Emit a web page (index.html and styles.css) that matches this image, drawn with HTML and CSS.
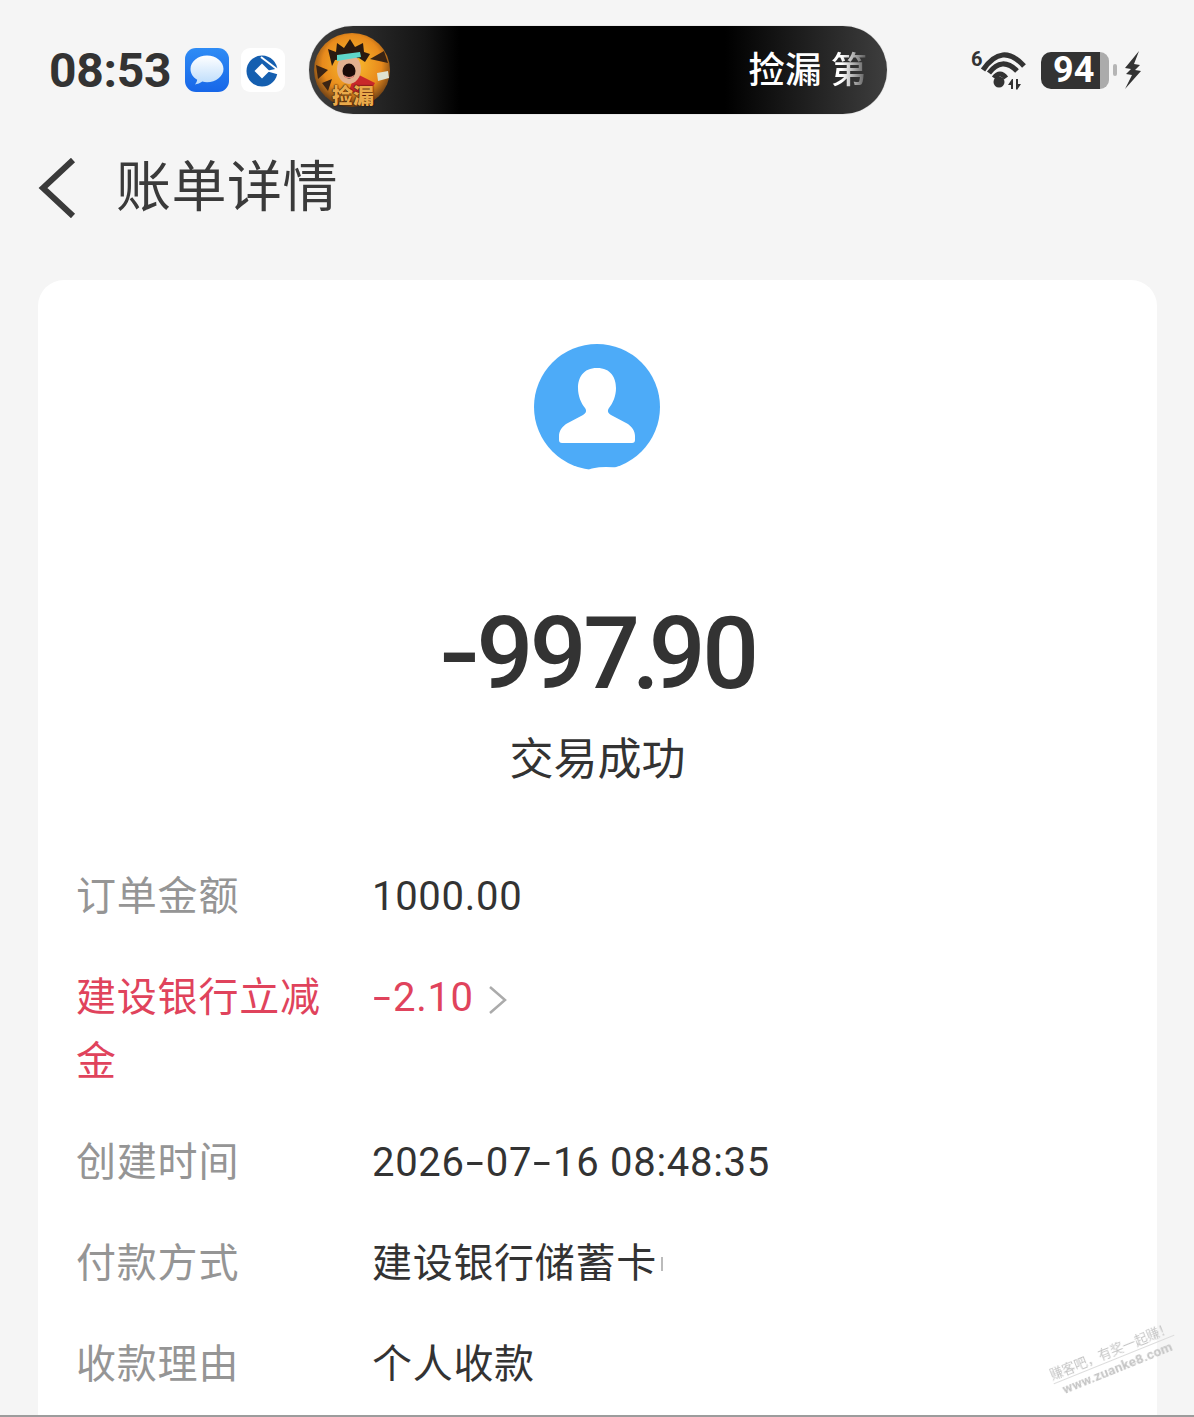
FILE: index.html
```html
<!DOCTYPE html>
<html lang="zh-CN">
<head>
  <meta charset="UTF-8" />
  <title>账单详情</title>
  <link rel="stylesheet" href="styles.css">
</head>
<body>
  <div class="page">
    <div class="statusbar">
      <div class="status-left">
        <span class="time">08:53</span>
        <svg class="app-icon" viewBox="0 0 44 44">
          <defs>
            <linearGradient id="msgBg" x1="0" y1="0" x2="0" y2="1"><stop offset="0" stop-color="#2f8cf5"/><stop offset="1" stop-color="#1766e8"/></linearGradient>
            <linearGradient id="msgFill" x1="0" y1="0" x2="0" y2="1"><stop offset="0" stop-color="#ffffff"/><stop offset="1" stop-color="#bcdcfb"/></linearGradient>
          </defs>
          <rect width="44" height="44" rx="11" fill="url(#msgBg)"/>
          <path d="M22 7.500C13 7.500 5.500 13.500 5.500 21c0 4.500 2.600 8.300 6.700 10.700-.2 1.800-1.100 3.500-2.400 4.800 2.900-.3 5.400-1.300 7.500-2.900 1.500.4 3.100.6 4.700.6 9 0 16.500-6 16.500-13.200S31 7.500 22 7.500z" fill="url(#msgFill)"/>
        </svg>
        <svg class="app-icon bank-icon" viewBox="0 0 44 44">
          <rect width="44" height="44" rx="9" fill="#fff"/>
          <circle cx="21" cy="23" r="15.500" fill="#155fb0"/>
          <path d="M21 15.500l7.500 7.500-7.500 7.500-7.500-7.500z" fill="#fff"/>
          <path d="M25 23l14-3v7z" fill="#fff"/>
          <path d="M20 9l17 13" fill="none" stroke="#fff" stroke-width="2"/>
        </svg>
      </div>
      <div class="island">
        <svg class="island-art" viewBox="0 0 76 74">
          <defs>
            <radialGradient id="fire" cx="0.5" cy="0.42" r="0.6"><stop offset="0" stop-color="#fbc02f"/><stop offset="0.65" stop-color="#e88a1c"/><stop offset="1" stop-color="#5a3414"/></radialGradient>
          </defs>
          <ellipse cx="38" cy="37" rx="38" ry="37" fill="url(#fire)"/>
          <path d="M2 32l12 5-10 9zM70 18l-14 8 18 4zM8 50l10-4-4 12z" fill="#3a2414"/>
          <path d="M41 40l20 10-8 14-18-6z" fill="#c9282a"/>
          <path d="M63 40l11-2 1 7-11 3z" fill="#dfe2cf"/>
          <path d="M14 16l8 3 1-9 7 5 6-9 5 8 8-4 1 9 6 2-5 8-6-4-24 2-3 6z" fill="#2a1a10"/>
          <ellipse cx="35" cy="36" rx="12" ry="15" fill="#e2b08e"/>
          <path d="M23 22l23-3 1 5-24 4z" fill="#5fd6c8"/>
          <ellipse cx="35" cy="38" rx="6.500" ry="7.500" fill="#1a0b08"/>
          <path d="M30 42q5 4 10 0l-1 3h-8z" fill="#e08a78"/>
        </svg>
        <span class="island-tag">捡漏</span>
        <span class="island-text">捡漏 <span class="fade">第</span></span>
      </div>
      <div class="status-right">
        <svg class="wifi" viewBox="0 -6 56 46">
          <text x="1" y="16" class="wifi-six">6</text>
          <path d="M13 20Q32-8 54 16M19 23Q32 6 47 21M24 28Q30 20 36 28" fill="none" stroke="#333" stroke-width="5.200"/>
          <circle cx="29" cy="32" r="5.500" fill="#333"/>
          <path d="M42 29l-4 6h3v4h2V29zM46 29h2v5h3l-4 6-1-1z" fill="#333"/>
        </svg>
        <div class="battery">
          <div class="battery-body"><span class="battery-level">94</span><span class="battery-rest"></span></div>
          <span class="battery-nub"></span>
        </div>
        <svg class="bolt" viewBox="0 0 18 38"><path d="M15 0L1 17l6 1-5 5 6 1L1 38l16-18-6-1 5-5-6-1z" fill="#333"/></svg>
      </div>
    </div>

    <div class="topbar">
      <svg class="back" viewBox="0 0 38 60"><path d="M35 2L5 30l30 28" fill="none" stroke="#3a3a3a" stroke-width="6"/></svg>
      <h1 class="title">账单详情</h1>
    </div>

    <div class="card">
      <svg class="avatar" viewBox="0 0 126 130">
        <circle cx="63" cy="63" r="63" fill="#4dabf8"/>
        <path d="M63 24c-14 0-19 10-19 20 0 8 3 15 7 20 2 3 1 5-2 7l-17 9c-4 3-7 7-7 12v4c0 2 1 3 3 3h70c2 0 3-1 3-3v-4c0-5-3-9-7-12l-17-9c-3-2-4-4-2-7 4-5 7-12 7-20 0-10-5-20-19-20z" fill="#fff"/>
        <ellipse cx="72" cy="127" rx="18" ry="4" fill="#fff"/>
      </svg>
      <div class="amount"><span class="dash big">-</span>99<span class="tight">7</span><span class="dot">.</span>90</div>
      <div class="trade-status">交易成功</div>
      <div class="rows">
        <div class="row">
          <div class="label">订单金额</div>
          <div class="value"><span>1000.00</span></div>
        </div>
        <div class="row promo">
          <div class="label">建设银行立减金</div>
          <div class="value">
            <span><span class="dash">-</span>2.10</span>
            <svg class="chevron" viewBox="0 0 20 30"><path d="M2 2l15 13L2 28" fill="none" stroke="#ababab" stroke-width="2.500"/></svg>
          </div>
        </div>
        <div class="row">
          <div class="label">创建时间</div>
          <div class="value"><span>2026<span class="dash">-</span>07<span class="dash">-</span>16 08:48:35</span></div>
        </div>
        <div class="row">
          <div class="label">付款方式</div>
          <div class="value"><span>建设银行储蓄卡</span><span class="cut"></span></div>
        </div>
        <div class="row">
          <div class="label">收款理由</div>
          <div class="value"><span>个人收款</span></div>
        </div>
      </div>
      <div class="watermark">
        <span class="wm-cn">赚客吧，有奖一起赚！</span>
        <span class="wm-en">www.zuanke8.com</span>
      </div>
    </div>
  </div>
</body>
</html>
```
FILE: styles.css
```css
* { box-sizing: border-box; }
html, body { margin: 0; padding: 0; }
body { background: #f5f5f5; font-family: Roboto, "Noto Sans CJK SC", sans-serif; color: #333; }

.page { width: 1194px; height: 1417px; overflow: hidden; border-bottom: 2px solid #9c9c9c; }

.statusbar { height: 114px; padding: 26px 52px 0 49px; display: flex; align-items: flex-start; }
.status-left { width: 260px; height: 88px; display: flex; align-items: center; }
.time { font-size: 48px; font-weight: 700; width: 136px; letter-spacing: -0.300px; color: #333; }
.app-icon { width: 44px; height: 44px; display: block; }
.bank-icon { margin-left: 12px; }

.island { position: relative; width: 578px; height: 88px; border-radius: 44px; background: linear-gradient(to right, #3e3e3e 0, #141414 20%, #000 26%, #000 72%, #3e3e3e 100%); display: flex; align-items: center; justify-content: flex-end; padding: 1px 20px 0 0; box-shadow: 0 0 1px #888; }
.island-art { position: absolute; left: 5px; top: 7px; width: 76px; height: 74px; }
.island-tag { position: absolute; left: 23px; top: 55px; font-size: 21px; line-height: 26px; font-weight: 900; color: #e9a94a; font-family: "Noto Sans CJK SC", sans-serif; text-shadow: 0 0 2px #2a0f03, 0 0 1px #2a0f03; }
.island-text { font-size: 36.500px; line-height: 48px; font-weight: 500; color: #fff; }
.fade { background: linear-gradient(to right, #fff 30%, #555 100%); -webkit-background-clip: text; background-clip: text; color: transparent; }

.status-right { flex: 1; height: 88px; display: flex; align-items: center; justify-content: flex-end; }
.wifi { width: 56px; height: 46px; margin: -6px 15px 0 0; display: block; }
.wifi-six { font-size: 20px; font-weight: 700; fill: #333; }
.battery { display: flex; align-items: center; }
.battery-body { width: 68px; height: 37px; display: flex; }
.battery-level { width: 59px; padding-left: 12px; line-height: 37px; font-size: 36px; font-weight: 700; color: #fff; background: #333; border-radius: 10px 0 0 10px; }
.battery-rest { flex: 1; background: #ababab; border-radius: 0 10px 10px 0; }
.battery-nub { width: 4px; height: 12px; margin-left: 4px; border-radius: 2px; background: #b5b5b5; }
.bolt { width: 18px; height: 38px; margin-left: 7px; display: block; }

.topbar { height: 166px; padding: 0 0 24px 38px; display: flex; align-items: center; }
.back { width: 38px; height: 60px; margin-top: 5px; display: block; }
.title { margin: 4px 0 0 40px; font-size: 55px; font-weight: 400; line-height: 72px; letter-spacing: 0.500px; color: #3a3a3a; }

.card { position: relative; width: 1119px; margin-left: 38px; height: 1300px; padding: 64px 38px 0; background: #fff; border-radius: 26px; }
.avatar { display: block; width: 126px; height: 130px; margin-left: 458px; }
.amount { margin-top: 125px; text-align: center; font-size: 100px; line-height: 110px; font-weight: 500; letter-spacing: -3.500px; color: #333; padding-right: 2px; }
.dash { display: inline-block; width: 21px; text-align: center; transform: scaleX(1.6); }
.dash.big { width: 39px; transform: scaleX(1.2); }
.tight { letter-spacing: -8px; }
.dot { letter-spacing: -11px; }
.trade-status { margin-top: 21px; text-align: center; font-size: 44px; line-height: 60px; color: #333; }

.rows { margin-top: 75px; display: flex; flex-direction: column; gap: 37px; }
.row { display: flex; font-size: 40px; line-height: 64px; }
.label { width: 245px; margin-right: 51px; color: #959595; letter-spacing: 0.800px; }
.value { display: flex; align-items: center; height: 64px; color: #333; letter-spacing: 0.700px; white-space: nowrap; }
.promo .label, .promo .value { color: #e0435c; }
.chevron { width: 20px; height: 30px; margin-left: 14px; margin-top: 4px; display: block; }
.cut { width: 2px; height: 14px; margin-left: 4px; background: #bbb; }

.watermark { position: absolute; left: 1011px; top: 1063px; width: 130px; display: flex; flex-direction: column; align-items: center; transform: rotate(-22deg); color: #c4c4c4; filter: blur(0.5px); white-space: nowrap; }
.wm-cn { font-size: 13px; line-height: 15px; padding-bottom: 1px; border-bottom: 1px solid #dcdcdc; }
.wm-en { font-size: 13.500px; line-height: 16px; font-weight: 700; letter-spacing: 0.200px; }
```
